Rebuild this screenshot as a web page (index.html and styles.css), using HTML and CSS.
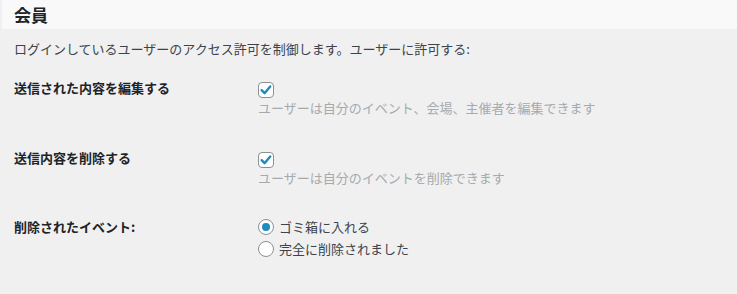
FILE: index.html
```html
<!DOCTYPE html>
<html lang="ja">
<head>
<meta charset="utf-8">
<title>会員</title>
<link rel="stylesheet" href="styles.css">
</head>
<body>
<h2 class="section-title">会員</h2>
<p class="intro">ログインしているユーザーのアクセス許可を制御します。ユーザーに許可する:</p>
<div class="settings">
  <div class="row">
    <div class="label">送信された内容を編集する</div>
    <div class="field">
      <span class="checkbox"><svg width="14" height="14" viewBox="0 0 14 14"><path d="M2.6 7.2 L5.6 10.2 L11.2 3.4" fill="none" stroke="#1e8cbe" stroke-width="2.4" stroke-linecap="round" stroke-linejoin="round"/></svg></span>
      <p class="desc">ユーザーは自分のイベント、会場、主催者を編集できます</p>
    </div>
  </div>
  <div class="row">
    <div class="label">送信内容を削除する</div>
    <div class="field">
      <span class="checkbox"><svg width="14" height="14" viewBox="0 0 14 14"><path d="M2.6 7.2 L5.6 10.2 L11.2 3.4" fill="none" stroke="#1e8cbe" stroke-width="2.4" stroke-linecap="round" stroke-linejoin="round"/></svg></span>
      <p class="desc">ユーザーは自分のイベントを削除できます</p>
    </div>
  </div>
  <div class="row row-choices">
    <div class="label">削除されたイベント:</div>
    <div class="field">
      <div class="choice"><span class="radio checked"></span><span>ゴミ箱に入れる</span></div>
      <div class="choice"><span class="radio"></span><span>完全に削除されました</span></div>
    </div>
  </div>
</div>
</body>
</html>
```
FILE: styles.css
```css
body {
  margin: 0;
  background: #f0f0f1;
  font-family: "Noto Sans CJK JP", "Noto Sans", sans-serif;
  font-size: 13px;
  color: #3c434a;
}

.section-title {
  margin: 0 0 0 2px;
  height: 29px;
  line-height: 29px;
  padding-left: 12px;
  background: #f9f9f9;
  font-size: 17px;
  font-weight: 700;
  color: #1d2327;
}

.intro {
  margin: 10px 0 0 14px;
  line-height: 20px;
  color: #3c434a;
}

.settings {
  margin: 20px 0 0 14px;
  display: flex;
  flex-direction: column;
}

.row {
  display: grid;
  grid-template-columns: 244px 1fr;
}

.row + .row {
  margin-top: 32px;
}

.row + .row.row-choices {
  margin-top: 29px;
}

.label {
  font-weight: 700;
  line-height: 18px;
  color: #1d2327;
}

.checkbox {
  display: flex;
  align-items: center;
  justify-content: center;
  box-sizing: border-box;
  width: 16px;
  height: 16px;
  margin-top: 3px;
  border: 1px solid #8c8f94;
  border-radius: 4px;
  background: #fff;
}

.desc {
  margin: 1px 0 0;
  line-height: 18px;
  color: #a7aaad;
}

.row-choices .label {
  line-height: 22px;
}

.choice {
  display: flex;
  align-items: center;
  gap: 5px;
  height: 22px;
  line-height: 22px;
  color: #3c434a;
}

.radio {
  display: flex;
  align-items: center;
  justify-content: center;
  box-sizing: border-box;
  width: 16px;
  height: 16px;
  border: 1px solid #8c8f94;
  border-radius: 50%;
  background: #fff;
}

.radio.checked::before {
  content: "";
  width: 8px;
  height: 8px;
  border-radius: 50%;
  background: #1e8cbe;
}
```
